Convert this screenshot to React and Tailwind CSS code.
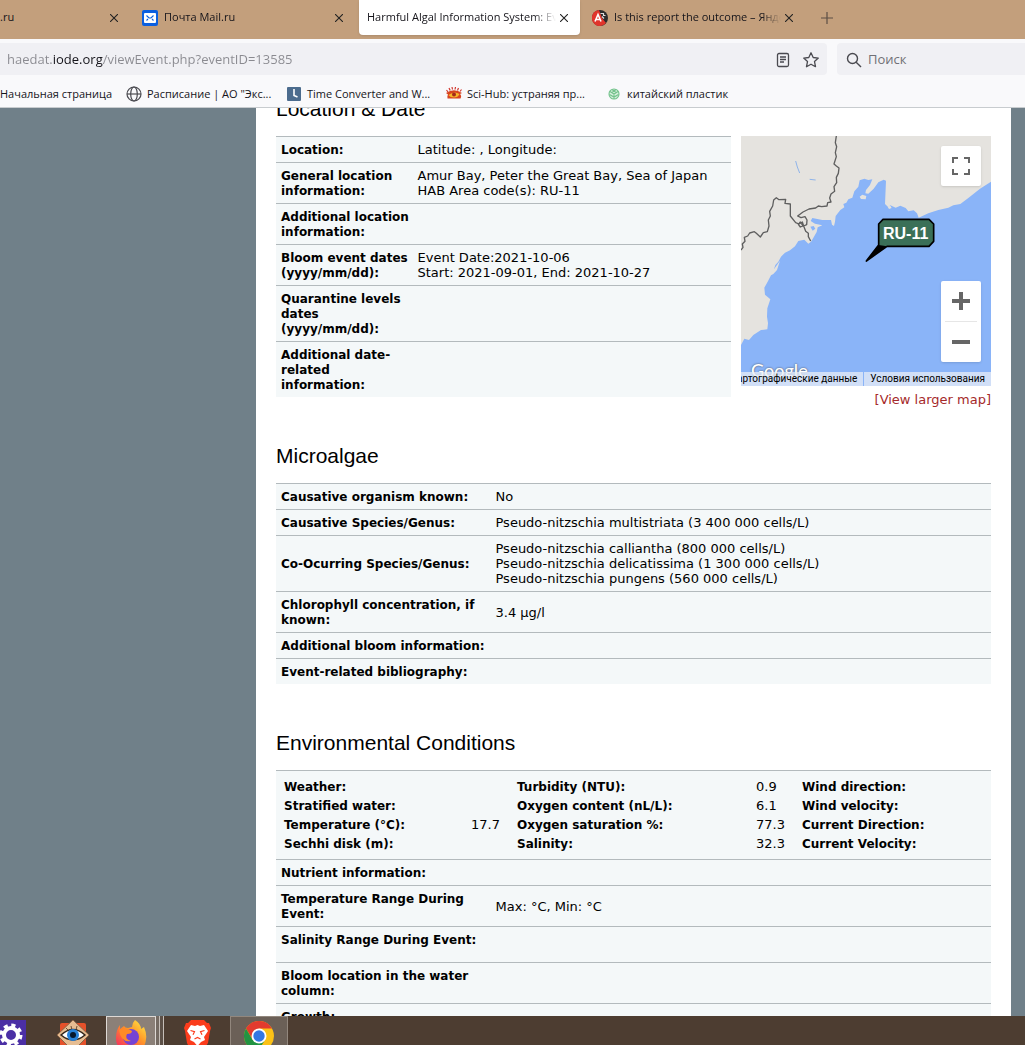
import React from 'react';

const locationRows = [
  { label: 'Location:', lines: ['Latitude: , Longitude:'] },
  {
    label: 'General location information:',
    lines: ['Amur Bay, Peter the Great Bay, Sea of Japan', 'HAB Area code(s): RU-11'],
  },
  { label: 'Additional location information:', lines: [] },
  {
    label: 'Bloom event dates (yyyy/mm/dd):',
    lines: ['Event Date:2021-10-06', 'Start: 2021-09-01, End: 2021-10-27'],
  },
  { label: 'Quarantine levels dates (yyyy/mm/dd):', lines: [] },
  { label: 'Additional date-related information:', lines: [] },
];

const microalgaeRows = [
  { label: 'Causative organism known:', lines: ['No'] },
  { label: 'Causative Species/Genus:', lines: ['Pseudo-nitzschia multistriata (3 400 000 cells/L)'] },
  {
    label: 'Co-Ocurring Species/Genus:',
    lines: [
      'Pseudo-nitzschia calliantha (800 000 cells/L)',
      'Pseudo-nitzschia delicatissima (1 300 000 cells/L)',
      'Pseudo-nitzschia pungens (560 000 cells/L)',
    ],
  },
  { label: 'Chlorophyll concentration, if known:', lines: ['3.4 µg/l'] },
  { label: 'Additional bloom information:', lines: [] },
  { label: 'Event-related bibliography:', lines: [] },
];

const conditionRows = [
  { label: 'Nutrient information:', lines: [] },
  { label: 'Temperature Range During Event:', lines: ['Max: °C, Min: °C'] },
  { label: 'Salinity Range During Event:', lines: [], tall: true },
  { label: 'Bloom location in the water column:', lines: [] },
  { label: 'Growth:', lines: [] },
];

const measurements = [
  ['Weather:', '', 'Turbidity (NTU):', '0.9', 'Wind direction:'],
  ['Stratified water:', '', 'Oxygen content (nL/L):', '6.1', 'Wind velocity:'],
  ['Temperature (°C):', '17.7', 'Oxygen saturation %:', '77.3', 'Current Direction:'],
  ['Sechhi disk (m):', '', 'Salinity:', '32.3', 'Current Velocity:'],
];

const MailIcon = () => (
  <svg className="size-4 shrink-0" viewBox="0 0 16 16">
    <rect width="16" height="16" rx="2" fill="#0b5fe0" />
    <rect x="2" y="3" width="12" height="10" rx="1" fill="#fff" />
    <path d="M4.500 5.500l2.500 2.500h2l2.500-2.500M4.500 10.500l1.500-1.500M11.500 10.500l-1.500-1.500" stroke="#0b5fe0" strokeWidth="1.100" fill="none" />
  </svg>
);

const ReportIcon = () => (
  <svg className="size-4 shrink-0" viewBox="0 0 16 16">
    <circle cx="8" cy="8" r="8" fill="#2b2b2b" />
    <path d="M7 0a8 8 0 1 0 7 13L10 8z" fill="#e0352b" />
    <path d="M3 11.500L6 4.500l3 7M4 9.500h4" stroke="#fff" strokeWidth="1.600" fill="none" />
    <path d="M8.500 3.500h3v2h2M10 6.500l2 2" stroke="#ddd" strokeWidth="1.200" fill="none" />
  </svg>
);

const GlobeIcon = () => (
  <svg className="size-4 shrink-0" viewBox="0 0 16 16" fill="none" stroke="#4a4a50" strokeWidth="1.200">
    <circle cx="8" cy="8" r="7" />
    <ellipse cx="8" cy="8" rx="3.300" ry="7" />
    <path d="M1 8h14" />
  </svg>
);

const ClockIcon = () => (
  <svg className="size-4 shrink-0" viewBox="0 0 16 16">
    <rect x="1" y="1" width="14" height="14" rx="1" fill="#4c6c8e" />
    <path d="M8 3v6.500l3.500 1.500" stroke="#fff" strokeWidth="1.600" fill="none" />
  </svg>
);

const SciHubIcon = () => (
  <svg className="size-4 shrink-0" viewBox="0 0 16 16">
    <path d="M.5 4l1.500 2M3 2l1.200 2.500M6 1l.5 2.500M9.500 1L9 3.500M12.500 2l-1 2.500M15.500 3.500L14 5.500" stroke="#d0342b" strokeWidth="1.200" />
    <path d="M0 7Q8 1.500 16 7L14 8Q16 10 14.500 12.500H1.500Q1 10 2 8.500z" fill="#d8441f" />
    <path d="M2.500 9Q8 4.500 13.500 8Q12 11.500 8 11.500T2.500 9z" fill="#f5b52a" />
    <circle cx="8" cy="8.500" r="2" fill="#a52a1a" />
  </svg>
);

const LeafIcon = () => (
  <svg className="size-4 shrink-0" viewBox="0 0 16 16" fill="none" stroke="#72c28b" strokeWidth="1.100">
    <circle cx="8" cy="8" r="5" fill="#d8f0df" />
    <path d="M4 5.500l4 2.500 4-2.500M8 8v5M3.500 8.500L8 11l4.500-2.500M6 3.500l4 3M10 3.500l-4 3" />
  </svg>
);

const tabs = [
  { title: '.ru', partial: true },
  { title: 'Почта Mail.ru', icon: <MailIcon /> },
  { title: 'Harmful Algal Information System: Event', active: true },
  { title: 'Is this report the outcome – Яндекс', icon: <ReportIcon /> },
];

const bookmarks = [
  { title: 'Расписание | АО "Экс...', icon: <GlobeIcon /> },
  { title: 'Time Converter and W...', icon: <ClockIcon /> },
  { title: 'Sci-Hub: устраняя пр...', icon: <SciHubIcon /> },
  { title: 'китайский пластик', icon: <LeafIcon /> },
];

const Tab = ({ tab }) => (
  <div
    className={`flex h-[35px] shrink-0 items-center gap-1.5 pr-2 ${
      tab.partial ? 'w-[130px]' : 'w-[221px] pl-2'
    } ${tab.active ? 'rounded-b bg-white shadow' : ''}`}
  >
    {tab.icon}
    <button
      className={`min-w-0 flex-1 overflow-hidden text-left whitespace-nowrap ${
        tab.partial ? '' : 'mask-r-from-88%'
      }`}
    >
      {tab.title}
    </button>
    <button aria-label="Close tab" className={`grid h-4 w-4 place-items-center ${tab.partial ? '' : '-ml-1.5'}`}>
      <svg className="size-2" viewBox="0 0 8 8" stroke="#222" strokeWidth="1.100">
        <path d="M0 0l8 8M8 0L0 8" />
      </svg>
    </button>
  </div>
);

const BrowserChrome = () => (
  <header className="shrink-0 border-b border-[#c8cccf] bg-[#f9f9fb] font-['Open_Sans','Noto_Sans',sans-serif] text-[11px] text-[#15141a]">
    <nav className="flex h-[39px] gap-1 overflow-hidden bg-[#c39f7c]">
      {tabs.map((tab) => (
        <Tab key={tab.title} tab={tab} />
      ))}
      <button aria-label="New tab" className="grid h-[35px] w-9 place-items-center">
        <svg className="size-3" viewBox="0 0 12 12" stroke="#5d4f45" strokeWidth="1.200">
          <path d="M6 0v12M0 6h12" />
        </svg>
      </button>
    </nav>

    <div className="flex gap-2.5 pt-1 text-[13px]">
      <div className="flex h-8 flex-1 items-center gap-3 rounded-r bg-[#f0f0f4] pt-0.5 pr-2 pl-[7px]">
        {/* the host name is darker than the rest of the address */}
        <input
          aria-label="Address"
          defaultValue="haedat.iode.org/viewEvent.php?eventID=13585"
          className="min-w-0 flex-1 bg-[linear-gradient(90deg,#8a8a90_45px,#15141a_45px,#15141a_96px,#8a8a90_96px)] bg-clip-text text-transparent outline-none"
        />
        <button aria-label="Reader view">
          <svg className="size-4" viewBox="0 0 16 16" fill="none" stroke="#4a4a50" strokeWidth="1.300">
            <rect x="2.500" y="1.500" width="11" height="13" rx="1.500" />
            <path d="M5 5h6M5 7.500h6M5 10h4" />
          </svg>
        </button>
        <button aria-label="Bookmark this page">
          <svg className="size-4" viewBox="0 0 16 16" fill="none" stroke="#4a4a50" strokeWidth="1.300" strokeLinejoin="round">
            <path d="M8 .8l2.200 4.700 5.100.6-3.800 3.500 1 5.100L8 12.200l-4.500 2.500 1-5.100L.7 6.100l5.100-.6z" />
          </svg>
        </button>
      </div>
      <label className="flex h-8 w-[188px] items-center gap-1.5 rounded-l bg-[#f0f0f4] pt-0.5 pl-[9px]">
        <svg className="size-4 shrink-0" viewBox="0 0 16 16" fill="none" stroke="#4a4a50" strokeWidth="1.400">
          <circle cx="6.500" cy="6.500" r="5" />
          <path d="M10.200 10.200l4.800 4.800" />
        </svg>
        <input aria-label="Search" placeholder="Поиск" className="min-w-0 flex-1 outline-none placeholder:text-[#707076]" />
      </label>
    </div>

    <nav className="flex h-8 items-center pt-1.5">
      <a href="#start" className="w-[126px] whitespace-nowrap">
        Начальная страница
      </a>
      {bookmarks.map((b) => (
        <a key={b.title} href="#bookmark" className="flex w-40 items-center gap-[5px] whitespace-nowrap">
          {b.icon}
          {b.title}
        </a>
      ))}
    </nav>
  </header>
);

const Lines = ({ lines }) => lines.map((line) => <div key={line}>{line}</div>);

const InfoRows = ({ rows }) =>
  rows.map((row) => (
    <tr key={row.label} className="border-t border-[#b3babd]">
      <th
        scope="row"
        className={`pt-1.5 pl-[5px] text-left text-xs leading-[15px] font-bold ${row.tall ? 'pb-3.5' : 'pb-1'}`}
      >
        {row.label}
      </th>
      <td className="p-[5px]">
        <Lines lines={row.lines} />
      </td>
    </tr>
  ));

const InfoTable = ({ children }) => (
  <table className="w-full table-fixed border-collapse bg-[#f4f8f9]">
    <colgroup>
      <col className="w-[30%]" />
      <col />
    </colgroup>
    <tbody>{children}</tbody>
  </table>
);

const SectionTitle = ({ children }) => (
  <h2 className="mb-[15px] font-['Liberation_Sans',Arial,sans-serif] text-[21px] leading-6">{children}</h2>
);

const Measurements = () => (
  <tr className="border-t border-[#b3babd]">
    <td colSpan={2} className="p-[5px]">
      <table className="w-full table-fixed border-separate border-spacing-[2px]">
        <colgroup>
          <col className="w-[185px]" />
          <col className="w-11" />
          <col className="w-[237px]" />
          <col className="w-11" />
          <col />
        </colgroup>
        <tbody>
          {measurements.map((row) => (
            <tr key={row[0]}>
              {row.map((cell, i) =>
                i % 2 === 0 ? (
                  <th key={i} scope="row" className="pt-0.5 pl-px text-left text-xs leading-[15px] font-bold">
                    {cell}
                  </th>
                ) : (
                  <td key={i} className="p-px">
                    {cell}
                  </td>
                )
              )}
            </tr>
          ))}
        </tbody>
      </table>
    </td>
  </tr>
);

const AreaMap = () => (
  <div className="w-[250px] shrink-0">
    <div className="relative h-[250px] overflow-hidden">
      <svg className="size-full" viewBox="18 18 750 750">
        <rect x="18" y="18" width="750" height="750" fill="#8ab4f8" />
        <path
          fill="#e5e3df"
          d="M18 18H768V155L735 176 700 204 676 222 655 226 640 233 610 240 580 250 551 263 546 250 536 241 520 244 512 234 496 227 482 233 466 226 460 232 450 222 453 152 446 149 430 157 416 176 400 191 391 190 393 180 405 165 412 148 400 150 388 146 374 151 370 170 358 184 352 203 340 208 334 218 325 222 328 232 316 240 302 258 300 275 297 288 291 284 288 270 262 270 232 264 227 273 240 281 262 286 248 292 245 306 236 322 228 335 220 341 208 329 190 333 180 349 165 361 150 368 138 380 130 395 121 405 117 418 126 405 135 392 126 420 115 432 108 436 98 455 88 473 90 494 106 508 97 535 96 560 99 580 97 598 78 600 55 615 42 630 28 626 18 645z"
        />
        <path fill="#e5e3df" d="M374 200l8-6 12 4-2 10-14-1zM458 230l8-3 4 7-8 3z" />
        <path fill="#8ab4f8" d="M226 290l10-2 5 8-8 6z" />
        <path fill="none" stroke="#8fb4ea" strokeWidth="3" d="M182 93l5 18 7 18M224 148l18 2" />
        <path
          fill="none"
          stroke="#5f5f5f"
          strokeWidth="4"
          strokeLinejoin="round"
          d="M304 18L301 38 305 50 301 68 304 80 297 102 304 108 312 114 310 130 304 142 305 158 297 170 299 184 288 192 284 204 288 216 278 218 276 228 260 230 250 228 242 234 222 237 204 246 188 258 198 263 210 260 216 270 215 284 206 288 202 276 192 282 182 278 166 258 166 222 150 220 152 208 132 209 124 203 116 210 113 228 104 244 106 258 100 270 102 288 97 305 85 308 76 321 64 310 58 305 44 309 38 318 28 322 30 334 22 342 24 352 18 360M190 283l6-7 8 12-8 3zM206 288L212 304 220 310 220 320 227 333"
        />
        <path
          d="M444 268H582L596 282V334L582 349H456L394 393 431 345V282z"
          fill="#3b7058"
          stroke="#000"
          strokeWidth="5"
          strokeLinejoin="round"
        />
        <path d="M394 393L431 345 456 349z" />
        <text x="444" y="328" fill="#fff" fontFamily="Liberation Sans" fontWeight="bold" fontSize="48">
          RU-11
        </text>
      </svg>
      <button aria-label="Full screen" className="absolute top-2.5 right-2.5 grid size-10 place-items-center rounded-xs bg-white shadow">
        <svg className="size-[18px]" viewBox="0 0 18 18" fill="none" stroke="#666" strokeWidth="2">
          <path d="M1 6V1h5M12 1h5v5M17 12v5h-5M6 17H1v-5" />
        </svg>
      </button>
      <div className="absolute right-2.5 bottom-6 w-10 rounded-xs bg-white shadow">
        <button aria-label="Zoom in" className="grid h-10 w-full place-items-center">
          <svg className="size-[18px]" viewBox="0 0 18 18" fill="#666">
            <path d="M7 0h4v7h7v4h-7v7H7v-7H0V7h7z" />
          </svg>
        </button>
        <div className="mx-1 h-px bg-[#e6e6e6]" />
        <button aria-label="Zoom out" className="grid h-10 w-full place-items-center">
          <svg className="size-[18px]" viewBox="0 0 18 18" fill="#666">
            <path d="M0 7h18v4H0z" />
          </svg>
        </button>
      </div>
      <span className="absolute bottom-1.5 left-2.5 font-['Lato',sans-serif] text-lg leading-5 font-medium text-white text-shadow-[0_0_2px_#444]">
        Google
      </span>
      <div className="absolute right-0 bottom-0 flex h-3.5 items-center font-['Roboto',sans-serif] text-[10px] whitespace-nowrap">
        <a href="#data" className="h-full bg-[#e8eef7]/75 px-1.5 leading-[14px]">
          Картографические данные
        </a>
        <a href="#terms" className="ml-px h-full bg-[#e8eef7]/75 px-1.5 leading-[14px]">
          Условия использования
        </a>
      </div>
    </div>
    <a href="#map" className="mt-1.5 block text-right text-[#a52a2a]">
      [View larger map]
    </a>
  </div>
);

const Taskbar = () => (
  <footer className="flex h-[29px] shrink-0 overflow-hidden bg-[#4d3d31]">
    <button aria-label="Settings" className="h-full w-[27px] pt-1">
      <svg className="h-[30px] w-[27px]" viewBox="0 0 27 30">
        <rect width="26" height="30" fill="#4b2fa5" />
        <circle cx="11" cy="15" r="7" fill="none" stroke="#fff" strokeWidth="4" />
        <circle cx="11" cy="15" r="9.500" fill="none" stroke="#fff" strokeWidth="4" strokeDasharray="4 3.460" />
      </svg>
    </button>
    <button aria-label="Image viewer" className="ml-[30px] h-full w-8 pt-1">
      <svg className="size-8" viewBox="0 0 32 32">
        <rect x="3" y="3" width="26" height="29" rx="2" fill="#e5512a" />
        <path d="M16 0L32 15 16 31 0 15z" fill="#e6bd92" stroke="#8a6547" />
        <path d="M9 8l3 3M14 6l1 4M20 6l-1 4" stroke="#6d5036" />
        <path d="M4 15Q16 4 28 15 16 25 4 15z" fill="#fff" stroke="#33261b" strokeWidth="1.500" />
        <circle cx="16" cy="15" r="6" fill="#2680d8" />
        <circle cx="16" cy="15" r="3" fill="#06172d" />
      </svg>
    </button>
    <button aria-label="Firefox" className="ml-[17px] flex h-full w-[50px] justify-center border border-b-0 border-[#ded9d5] bg-[#8b8078] pt-0.5">
      <svg className="size-8 shrink-0" viewBox="0 0 32 32">
        <defs>
          <linearGradient id="fox" x1="1" y1="0" x2="0.200" y2="1">
            <stop offset="0" stopColor="#fff04a" />
            <stop offset="0.450" stopColor="#ff9528" />
            <stop offset="1" stopColor="#f52763" />
          </linearGradient>
        </defs>
        <path
          d="M20 1q6 4 6 9l3-2q3 7 2 12A15 15 0 0 1 1 19Q1 11 5 6v4l4-3q1 2 4 2l4-1q0-4 3-7z"
          fill="url(#fox)"
        />
        <circle cx="16" cy="18" r="8" fill="#7543d5" />
        <path d="M4 11q6-4 13 1 0 3-5 3-3 5 4 7-10 2-12-11z" fill="#ff8b26" />
      </svg>
    </button>
    <span className="h-full w-1 border-r border-[#c5beb8] bg-[#756b63]" />
    <span className="h-full w-1 border-r border-[#c5beb8] bg-[#5c5047]" />
    <button aria-label="Brave" className="ml-5 h-full w-[27px] pt-1">
      <svg className="h-8 w-[27px]" viewBox="0 0 27 32">
        <path d="M7 0h13l3 3 2 0 2 5-1 3-2 12-4 6-7 3-7-3-3-6L1 11 0 8l2-5 2 0z" fill="#fb3c1c" />
        <path d="M7 5l4 1 2.500-1L16 6l4-1 4 6-4 6 1 3-4 2-3.500 4L10 22l-4-2 1-3-4-6z" fill="#fff" />
        <path d="M6.500 10.500l4 1.200-1.500 3M20.500 10.500l-4 1.200 1.500 3M10.500 19l3-1.500 3 1.500" fill="none" stroke="#fb3c1c" strokeWidth="1.200" />
      </svg>
    </button>
    <button aria-label="Chrome" className="ml-[19px] flex h-full w-[58px] justify-center border border-b-0 border-[#92877d] bg-[#6b6057] pt-1">
      <svg className="size-[30px] shrink-0" viewBox="0 0 30 30">
        <circle cx="15" cy="15" r="15" fill="#fbc116" />
        <path d="M2 7.500A15 15 0 0 1 28 7.500H15L9 19z" fill="#e33b2e" />
        <path d="M2 7.500A15 15 0 0 0 14 30L21 19 15 22 8.500 18.700z" fill="#229342" />
        <circle cx="15" cy="15" r="7.500" fill="#fff" />
        <circle cx="15" cy="15" r="5.700" fill="#3477e4" />
      </svg>
    </button>
  </footer>
);

const App = () => {
  return (
    <div className="flex h-screen flex-col overflow-hidden">
      <BrowserChrome />
      <main className="min-h-0 flex-1 overflow-hidden bg-[#708089] pr-3.5 pl-64 font-['DejaVu_Sans',Verdana,sans-serif] text-[13px] leading-[15px] text-black">
        <div className="min-h-full overflow-hidden bg-white px-5">
          {/* page is scrolled a little past the first heading */}
          <section className="-mt-[11px] mb-[37px]">
            <SectionTitle>Location &amp; Date</SectionTitle>
            <div className="flex items-start gap-2.5">
              <div className="min-w-0 flex-1">
                <InfoTable>
                  <InfoRows rows={locationRows} />
                </InfoTable>
              </div>
              <AreaMap />
            </div>
          </section>

          <section className="mb-[47px]">
            <SectionTitle>Microalgae</SectionTitle>
            <InfoTable>
              <InfoRows rows={microalgaeRows} />
            </InfoTable>
          </section>

          <section>
            <SectionTitle>Environmental Conditions</SectionTitle>
            <InfoTable>
              <Measurements />
              <InfoRows rows={conditionRows} />
            </InfoTable>
          </section>
        </div>
      </main>
      <Taskbar />
    </div>
  );
};

export default App;
